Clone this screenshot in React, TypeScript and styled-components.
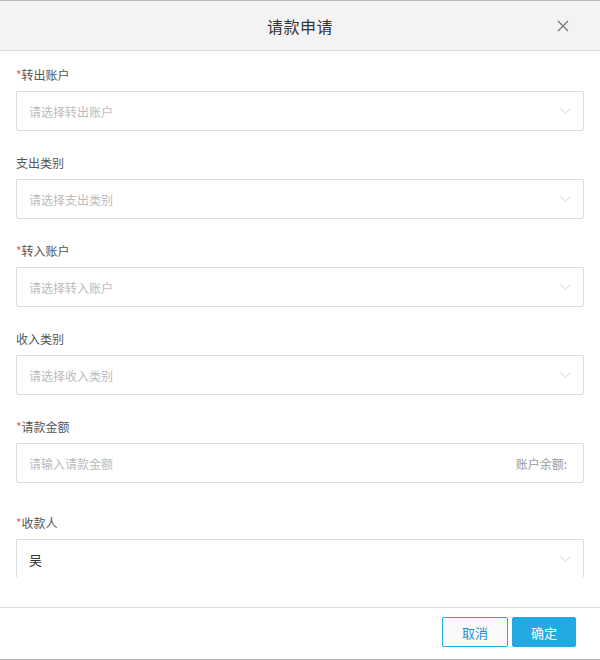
import React from "react";
import styled, { createGlobalStyle } from "styled-components";

const GlobalStyle = createGlobalStyle`
  html, body {
    margin: 0;
    padding: 0;
    background: #ffffff;
  }
  body {
    font-family: "Noto Sans CJK SC", "Noto Sans", sans-serif;
  }
`;

const Dialog = styled.div`
  width: 600px;
  height: 660px;
  box-sizing: border-box;
  border-top: 1px solid #b9b9b9;
  border-bottom: 1px solid #b9b9b9;
  background: #ffffff;
  display: flex;
  flex-direction: column;
`;

const Header = styled.div`
  height: 49px;
  flex: none;
  background: #f3f3f3;
  border-bottom: 1px solid #dddddd;
  display: flex;
  align-items: center;
  justify-content: center;
  position: relative;
`;

const Title = styled.div`
  font-size: 16px;
  color: #333333;
  letter-spacing: 0.5px;
`;

const Close = styled.button`
  position: absolute;
  right: 31px;
  top: 19px;
  width: 12px;
  height: 12px;
  padding: 0;
  border: none;
  background: transparent;
  cursor: pointer;
  display: flex;
`;

const Body = styled.div`
  height: 526px;
  flex: none;
  overflow: hidden;
  padding: 14px 16px 0;
  box-sizing: border-box;
`;

const Spacer = styled.div`
  height: 30px;
  flex: none;
`;

const Field = styled.div<{ $gap?: number }>`
  margin-bottom: ${(p) => p.$gap ?? 22}px;
`;

const Label = styled.div`
  height: 20px;
  line-height: 20px;
  font-size: 12px;
  color: #555555;
  margin-bottom: 6px;
`;

const Star = styled.span`
  color: #f25a5a;
  font-size: 12px;
`;

const Box = styled.div`
  height: 40px;
  box-sizing: border-box;
  border: 1px solid #dddddd;
  border-radius: 2px;
  display: flex;
  align-items: center;
  padding: 0 12px;
  font-size: 12px;
`;

const Value = styled.span<{ $empty?: boolean }>`
  flex: 1;
  color: ${(p) => (p.$empty ? "#bbbbbb" : "#333333")};
  font-size: ${(p) => (p.$empty ? "12px" : "13px")};
`;

const Suffix = styled.span`
  color: #999999;
  font-size: 12px;
  margin-right: 4px;
`;

const Footer = styled.div`
  flex: 1;
  border-top: 1px solid #dddddd;
  display: flex;
  justify-content: flex-end;
  align-items: flex-start;
  padding: 9px 24px 0 0;
  gap: 4px;
`;

const Button = styled.button<{ $primary?: boolean }>`
  height: 30px;
  width: ${(p) => (p.$primary ? 64 : 66)}px;
  box-sizing: border-box;
  border-radius: 2px;
  border: 1px solid #22a9e3;
  background: ${(p) => (p.$primary ? "#22abe3" : "#fafafa")};
  color: ${(p) => (p.$primary ? "#ffffff" : "#1f95cf")};
  font-family: "Noto Sans CJK SC", sans-serif;
  font-size: 13px;
  padding: 0;
  cursor: pointer;
`;

const Chevron = () => (
  <svg width="11" height="6" viewBox="0 0 11 6" fill="none">
    <path d="M0.5 0.5 L5.5 5 L10.5 0.5" stroke="#cfcfcf" strokeWidth="1" />
  </svg>
);

const CloseIcon = () => (
  <svg width="12" height="12" viewBox="0 0 12 12">
    <path d="M1 1 L11 11 M11 1 L1 11" stroke="#777777" strokeWidth="1.3" />
  </svg>
);

interface IField {
  label: string;
  required?: boolean;
  placeholder?: string;
  value?: string;
  select?: boolean;
  suffix?: string;
  gap?: number;
}

const fields: IField[] = [
  { label: "转出账户", required: true, placeholder: "请选择转出账户", select: true },
  { label: "支出类别", placeholder: "请选择支出类别", select: true },
  { label: "转入账户", required: true, placeholder: "请选择转入账户", select: true },
  { label: "收入类别", placeholder: "请选择收入类别", select: true },
  { label: "请款金额", required: true, placeholder: "请输入请款金额", suffix: "账户余额:", gap: 30 },
  { label: "收款人", required: true, value: "吴", select: true },
];

const App: React.FC = () => {
  return (
    <>
      <GlobalStyle />
      <Dialog>
        <Header>
          <Title>请款申请</Title>
          <Close>
            <CloseIcon />
          </Close>
        </Header>
        <Body>
          {fields.map((f) => (
            <Field key={f.label} $gap={f.gap}>
              <Label>
                {f.required && <Star>*</Star>}
                {f.label}
              </Label>
              <Box>
                <Value $empty={!f.value}>{f.value || f.placeholder}</Value>
                {f.suffix && <Suffix>{f.suffix}</Suffix>}
                {f.select && <Chevron />}
              </Box>
            </Field>
          ))}
        </Body>
        <Spacer />
        <Footer>
          <Button>取消</Button>
          <Button $primary>确定</Button>
        </Footer>
      </Dialog>
    </>
  );
};

export default App;
